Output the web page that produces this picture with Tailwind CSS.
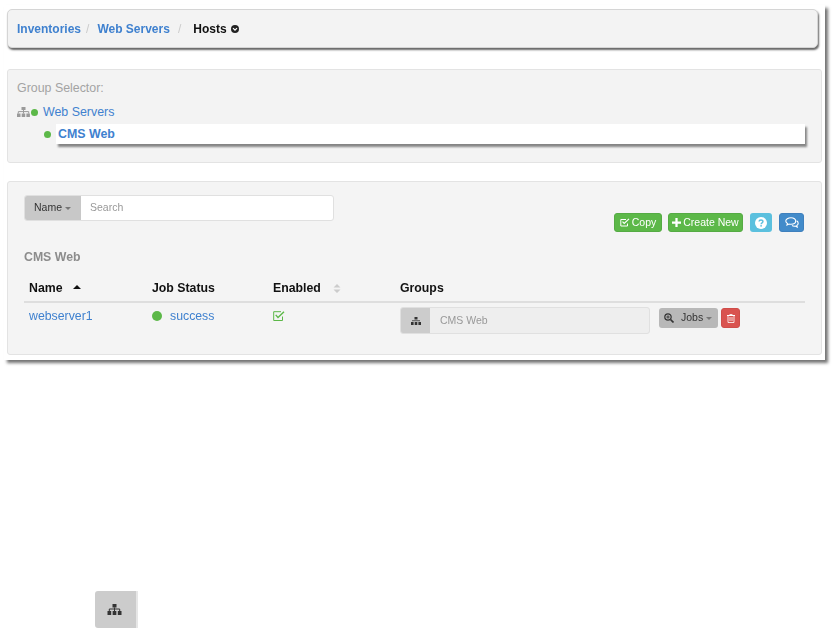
<!DOCTYPE html>
<html><head><meta charset="utf-8"><script src="https://cdn.jsdelivr.net/npm/@tailwindcss/browser@4"></script></head>
<body class="bg-white font-['Liberation_Sans',Arial,sans-serif] overflow-hidden">
<div class="w-[838px] h-[629px] flex flex-col blur-[0.45px]">
  <div class="mt-[5px] ml-[4px] w-[821px] h-[355px] shrink-0 bg-white shadow-[3px_3px_3px_rgba(0,0,0,0.55)] pl-[3px] pt-[4px] flex flex-col">
    <!-- Breadcrumb -->
    <div class="w-[811px] h-[39px] shrink-0 rounded-[5px] bg-[#f3f3f3] border border-[#d5d5d5] shadow-[1px_2px_2px_rgba(0,0,0,0.6)] pl-[9px] flex items-center text-[12px] font-bold">
      <span class="text-[#3f81cf]">Inventories</span>
      <span class="text-[#cccccc] font-normal ml-[5px]">/</span>
      <span class="text-[#3f81cf] ml-[8px]">Web Servers</span>
      <span class="text-[#cccccc] font-normal ml-[8px]">/</span>
      <span class="text-[#111] ml-[12px]">Hosts</span>
      <svg class="ml-[4px] mt-[1px]" width="8" height="8" viewBox="0 0 8 8"><circle cx="4" cy="4" r="4" fill="#222"/><path d="M2 3.2 4 5.2 6 3.2" fill="none" stroke="#fff" stroke-width="1.2"/></svg>
    </div>
    <!-- Group selector -->
    <div class="relative mt-[21px] w-[815px] h-[94px] shrink-0 rounded-[3px] bg-[#f3f3f3] border border-[#e3e3e3] pt-[11px] pl-[9px] text-[12.4px]">
      <div class="text-[#a3a3a3] leading-[14px] h-[14px]">Group Selector:</div>
      <div class="mt-[10px] flex items-center h-[14px]">
        <svg width="13" height="10" viewBox="0 0 13 10" fill="#9a9a9a"><rect x="4.5" y="0" width="4" height="3"/><rect x="0" y="6.5" width="3.5" height="3.5"/><rect x="4.7" y="6.5" width="3.5" height="3.5"/><rect x="9.4" y="6.5" width="3.5" height="3.5"/><path d="M1.3 6.5V4.6h10.4v1.9M6.5 3v3.5" fill="none" stroke="#9a9a9a"/></svg>
        <span class="ml-[1px] w-[7px] h-[7px] rounded-full bg-[#5cb848]"></span>
        <span class="ml-[5px] text-[#3f81cf]">Web Servers</span>
      </div>
      <div class="mt-[5px] flex items-center h-[20px]">
        <span class="ml-[27px] w-[7px] h-[7px] rounded-full bg-[#5cb848]"></span>
        <div class="ml-[5px] w-[749px] h-[20px] bg-white shadow-[2px_3px_2px_rgba(0,0,0,0.45)] flex items-center pl-[2px] font-bold text-[#3f81cf]">CMS Web</div>
      </div>
    </div>
    <!-- Main panel -->
    <div class="mt-[18px] w-[815px] h-[174px] shrink-0 rounded-[3px] bg-[#f4f4f4] border border-[#e3e3e3] pl-[16px] pt-[13px] text-[12.3px]">
      <div class="w-[310px] h-[26px] flex rounded-[3px] border border-[#e0e0e0] bg-white overflow-hidden text-[10.5px]">
        <div class="w-[56px] bg-[#c8c8c8] text-[#333] flex items-center pl-[9px]">Name<span class="ml-[3px] w-0 h-0 border-x-[3px] border-x-transparent border-t-[3px] border-t-[#777]"></span></div>
        <div class="flex-1 pl-[9px] flex items-center text-[#999]">Search</div>
      </div>
      <div class="h-[19px] mt-[-8px] flex justify-end pr-[1px] w-[781px] text-[10.5px] text-white gap-[6px]">
        <div class="w-[48px] rounded-[3px] bg-[#5cb848] border border-[#55ab44] flex items-center justify-center gap-[2px]">
          <svg width="10" height="9" viewBox="0 0 10 9" fill="none" stroke="#fff"><path d="M7.5 5.5V8H.8V1.5H6"/><path d="M2.5 3.7 4.2 5.4 9 .9" stroke-width="1.2"/></svg>Copy
        </div>
        <div class="w-[75px] rounded-[3px] bg-[#5cb848] border border-[#55ab44] flex items-center justify-center gap-[2px]">
          <svg width="9" height="9" viewBox="0 0 8 8" fill="#fff"><path d="M3 0h2v3h3v2H5v3H3V5H0V3h3z"/></svg>Create New
        </div>
        <div class="ml-[1px] w-[22px] rounded-[3px] bg-[#5bc0de] flex items-center justify-center">
          <svg width="12" height="12" viewBox="0 0 11 11"><circle cx="5.5" cy="5.5" r="5.5" fill="#fff"/><path d="M3.7 4.2C3.8 2.2 7.3 2.2 7.3 4.2 7.3 5.4 5.6 5.3 5.6 6.6" fill="none" stroke="#5bc0de" stroke-width="1.3"/><rect x="4.9" y="7.4" width="1.4" height="1.4" fill="#5bc0de"/></svg>
        </div>
        <div class="ml-[1px] w-[25px] rounded-[3px] bg-[#428bca] border border-[#3f80bd] flex items-center justify-center">
          <svg width="14" height="11" viewBox="0 0 14 11" fill="none" stroke="#fff" stroke-width="1.1"><path d="M6 .8C3 .8.8 2.2.8 4c0 1 .6 1.8 1.6 2.4L2 8l2-1c.6.2 1.3.2 2 .2 3 0 4.7-1.4 4.7-3.2S9 .8 6 .8z"/><path d="M11.6 3.8c1 .6 1.6 1.4 1.6 2.4 0 1-.5 1.7-1.4 2.3l.4 1.6-2-1c-1 .2-2.3 0-3.2-.5"/></svg>
        </div>
      </div>
      <div class="mt-[18px] h-[14px] leading-[14px] font-bold text-[#8c8c8c]">CMS Web</div>
      <div class="mt-[17px] h-[14px] w-[781px] flex items-center font-bold text-[#111] leading-[14px]">
        <div class="w-[123px] pl-[5px] flex items-center">Name<svg class="ml-[10px] mb-[3px]" width="8" height="4" viewBox="0 0 8 4" fill="#111"><path d="M4 0 8 4H0z"/></svg></div>
        <div class="w-[121px] pl-[5px]">Job Status</div>
        <div class="w-[132px] pl-[5px] flex items-center">Enabled<svg class="ml-[12px]" width="8" height="9" viewBox="0 0 8 9" fill="#ccc"><path d="M4 0 7.5 3.5H.5zM4 9 .5 5.5h7z"/></svg></div>
        <div>Groups</div>
      </div>
      <div class="mt-[6px] h-[2px] w-[781px] bg-[#dedede]"></div>
      <div class="w-[781px] flex text-[#3f81cf]">
        <div class="w-[123px] pl-[5px] mt-[6px] leading-[14px] h-[14px]">webserver1</div>
        <div class="w-[121px] pl-[5px] mt-[6px] flex items-center h-[14px]"><span class="w-[10px] h-[10px] rounded-full bg-[#5cb848]"></span><span class="ml-[8px]">success</span></div>
        <div class="w-[132px] pl-[5px] mt-[6px] h-[14px] flex items-center">
          <svg width="12" height="10" viewBox="0 0 12 10" fill="none" stroke="#5cb848"><path d="M9.5 5.5V9.5H.7V.7H8"/><path d="M2.7 3.9 5 6.4 11 .8" stroke-width="1.4"/></svg>
        </div>
        <div class="mt-[4px] w-[250px] h-[27px] flex rounded-[3px] border border-[#e0e0e0] bg-[#eeeeee] overflow-hidden">
          <div class="w-[29px] bg-[#cccccc] flex items-center justify-center">
            <svg width="10" height="8" viewBox="0 0 10 8" fill="#333"><rect x="3.5" y="0" width="3" height="2.5"/><rect x="0" y="5" width="2.6" height="3"/><rect x="3.7" y="5" width="2.6" height="3"/><rect x="7.4" y="5" width="2.6" height="3"/><rect x="1" y="3.4" width="8" height=".8"/></svg>
          </div>
          <div class="pl-[10px] flex items-center text-[#999] text-[10.5px]">CMS Web</div>
        </div>
        <div class="ml-[9px] mt-[5px] w-[59px] h-[20px] rounded-[3px] bg-[#b8b8b8] flex items-center pl-[5px] text-[#333] text-[10.5px]">
          <svg width="10" height="10" viewBox="0 0 10 10" fill="none" stroke="#333" stroke-width="1.2"><circle cx="4" cy="4" r="3.2"/><path d="M6.5 6.5 9.5 9.5" stroke-width="1.7"/><path d="M2.3 4h3.4M4 2.3v3.4" stroke-width=".9"/></svg>
          <span class="ml-[7px]">Jobs</span><span class="ml-[3px] w-0 h-0 border-x-[3px] border-x-transparent border-t-[3px] border-t-[#777]"></span>
        </div>
        <div class="ml-[3px] mt-[5px] w-[19px] h-[20px] rounded-[3px] bg-[#d9534f] border border-[#cf4d49] flex items-center justify-center">
          <svg width="8" height="9" viewBox="0 0 8 9" fill="none" stroke="#fff"><path d="M0 1.5h8" /><path d="M2.8 1.5V.5h2.4v1M1 1.5v7h6v-7M3 3v4M5 3v4" stroke-width=".8"/></svg>
        </div>
      </div>
    </div>
  </div>
  <!-- detached group button -->
  <div class="mt-[231px] ml-[95px] w-[43px] h-[37px] rounded-l-[3px] bg-[#cccccc] border-r-[2px] border-r-[#e6e6e6] flex items-center justify-center pr-[3px] shrink-0">
    <svg width="15" height="11" viewBox="0 0 14 11" fill="#333"><rect x="5" y="0" width="4" height="3.5"/><rect x="0" y="7" width="3.7" height="4"/><rect x="5.15" y="7" width="3.7" height="4"/><rect x="10.3" y="7" width="3.7" height="4"/><path d="M1.8 7V5h10.4v2M7 3.5V7" fill="none" stroke="#333"/></svg>
  </div>
</div>
</body></html>
